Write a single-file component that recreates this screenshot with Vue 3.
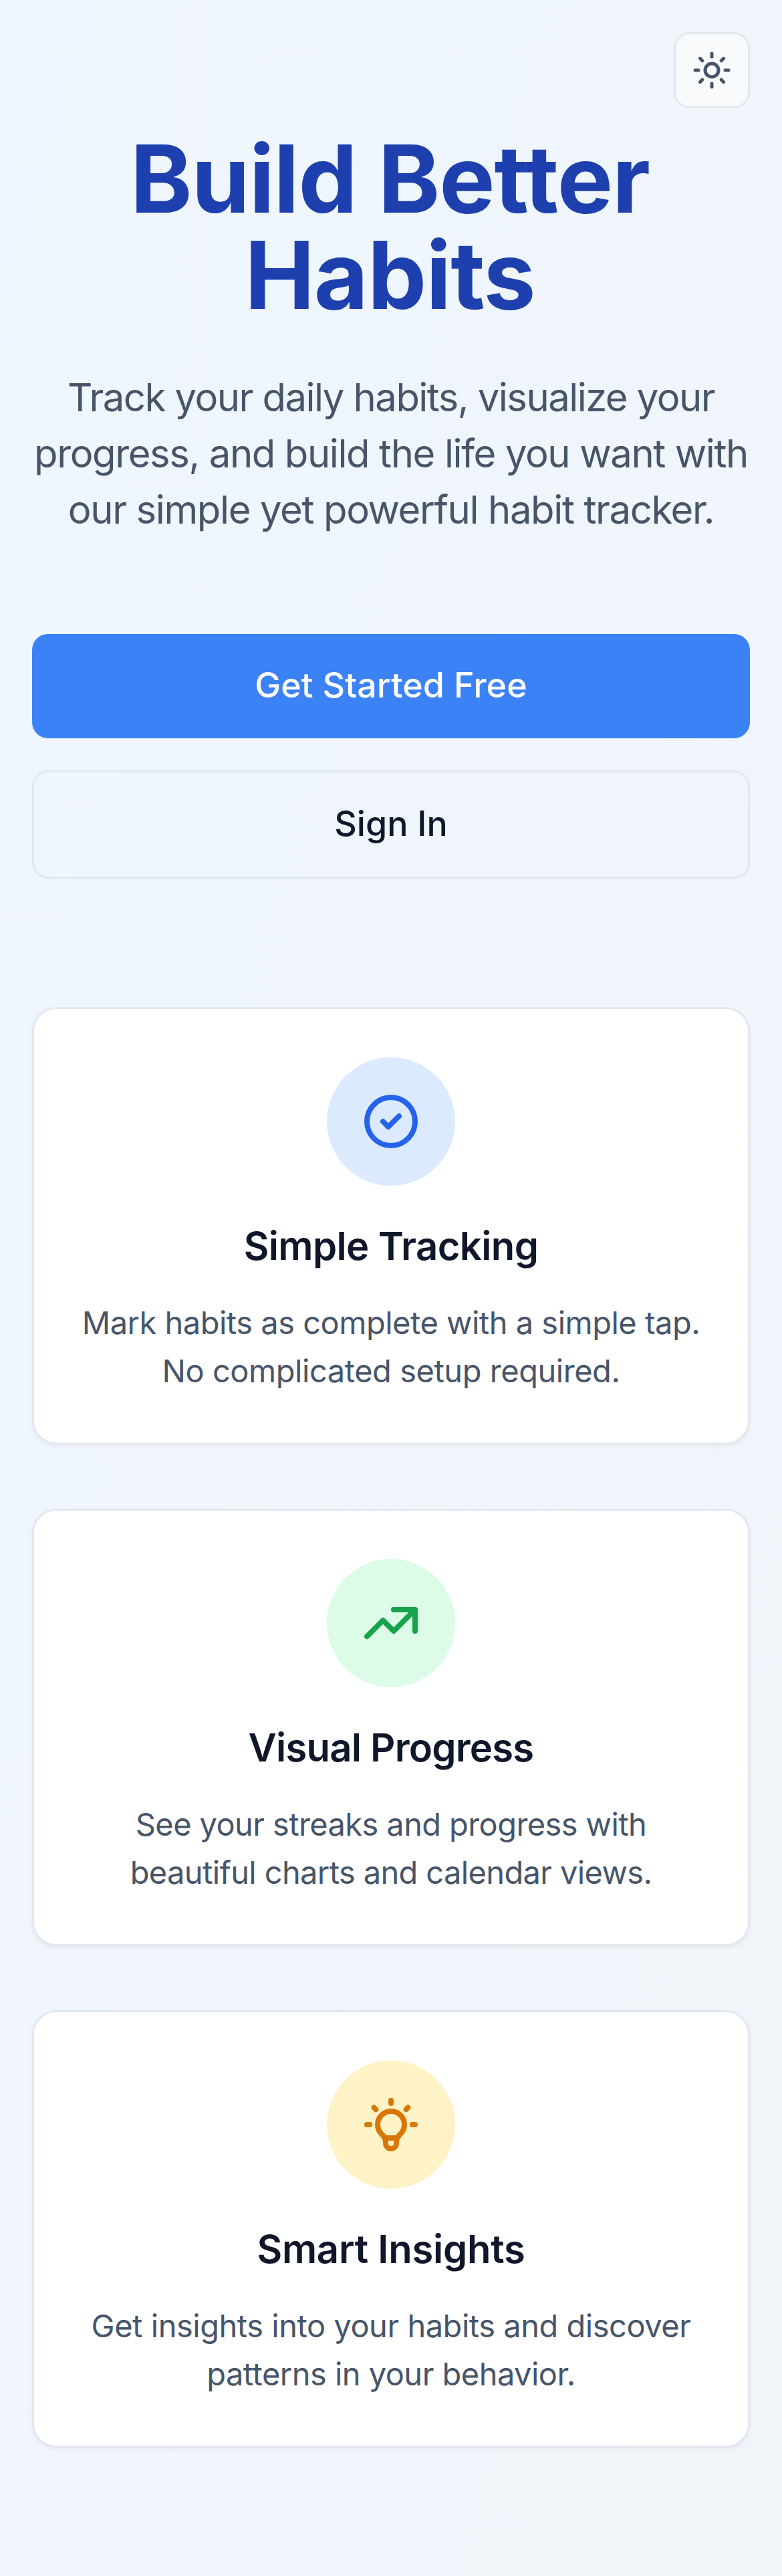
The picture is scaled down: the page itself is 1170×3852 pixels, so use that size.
<script setup>
const headline = [
  { text: 'Build Better', track: -1.06 },
  { text: 'Habits', track: -1.06 },
]

const intro = [
  { text: 'Track your daily habits, visualize your', track: -1.54 },
  { text: 'progress, and build the life you want with', track: -1.4 },
  { text: 'our simple yet powerful habit tracker.', track: -1.38 },
]

const features = [
  {
    tone: 'blue',
    title: { text: 'Simple Tracking', track: -0.62 },
    icon: 'M9 12l2 2 4-4m6 2a9 9 0 11-18 0 9 9 0 0118 0z',
    lines: [
      { text: 'Mark habits as complete with a simple tap.', track: -0.5 },
      { text: 'No complicated setup required.', track: -0.46 },
    ],
  },
  {
    tone: 'green',
    title: { text: 'Visual Progress', track: -0.77 },
    icon: 'M13 7h8m0 0v8m0-8l-8 8-4-4-6 6',
    lines: [
      { text: 'See your streaks and progress with', track: -0.6 },
      { text: 'beautiful charts and calendar views.', track: -0.63 },
    ],
  },
  {
    tone: 'amber',
    title: { text: 'Smart Insights', track: -0.25 },
    icon: 'M9.663 17h4.673M12 3v1m6.364 1.636l-.707.707M21 12h-1M4 12H3m3.343-5.657l-.707-.707m2.828 9.9a5 5 0 117.072 0l-.548.547A3.374 3.374 0 0014 18.469V19a2 2 0 11-4 0v-.531c0-.895-.356-1.754-.988-2.386l-.548-.547z',
    lines: [
      { text: 'Get insights into your habits and discover', track: -0.48 },
      { text: 'patterns in your behavior.', track: -0.52 },
    ],
  },
]

const tracking = (line) => ({ letterSpacing: `${line.track}px` })
</script>

<template>
  <div class="page">
    <header class="topbar">
      <button class="theme-toggle" type="button" aria-label="Toggle theme">
        <svg viewBox="0 0 24 24" aria-hidden="true">
          <circle cx="12" cy="12" r="4" />
          <path d="M12 2v2M12 20v2M4.93 4.93l1.41 1.41M17.66 17.66l1.41 1.41M2 12h2M20 12h2M6.34 17.66l-1.41 1.41M19.07 4.93l-1.41 1.41" />
        </svg>
      </button>
    </header>

    <main>
      <h1 class="headline">
        <span v-for="line in headline" :key="line.text" class="line" :style="tracking(line)">{{ line.text }}</span>
      </h1>
      <p class="intro">
        <span v-for="line in intro" :key="line.text" class="line" :style="tracking(line)">{{ line.text }}</span>
      </p>

      <div class="actions">
        <a class="btn primary">Get Started Free</a>
        <a class="btn outline">Sign In</a>
      </div>

      <section class="features">
        <article v-for="f in features" :key="f.tone" class="card">
          <div class="badge" :class="f.tone">
            <svg viewBox="0 0 24 24" aria-hidden="true"><path :d="f.icon" /></svg>
          </div>
          <h3 class="title" :style="tracking(f.title)">{{ f.title.text }}</h3>
          <p class="desc">
            <span v-for="line in f.lines" :key="line.text" class="line" :style="tracking(line)">{{ line.text }}</span>
          </p>
        </article>
      </section>
    </main>
  </div>
</template>

<style>
body {
  margin: 0;
}
</style>

<style scoped>
.page {
  box-sizing: border-box;
  min-height: 3852px;
  padding: 48px 48px 192px;
  background: linear-gradient(to bottom right, #eff6ff, #f1f5f9);
  color: #0f172a;
  font-family: Inter, "Liberation Sans", sans-serif;
  text-align: center;
}

svg {
  display: block;
  fill: none;
  stroke: currentColor;
  stroke-width: 2;
  stroke-linecap: round;
  stroke-linejoin: round;
}

.topbar {
  display: flex;
  justify-content: flex-end;
}

.theme-toggle {
  box-sizing: border-box;
  display: flex;
  align-items: center;
  justify-content: center;
  width: 114px;
  height: 114px;
  padding: 0;
  border: 3px solid #e2e8f0;
  border-radius: 24px;
  background: #f8fafc;
  color: #475569;
}

.theme-toggle svg {
  width: 60px;
  height: 60px;
}

.line {
  display: block;
  white-space: nowrap;
}

.headline {
  margin: 33px 0 69px;
  padding-right: 3px;
  color: #1e40af;
  font-size: 140px;
  font-weight: 700;
  line-height: 144px;
}

.intro {
  margin: 0;
  color: #475569;
  font-size: 58px;
  line-height: 84px;
}

.actions {
  display: flex;
  flex-direction: column;
  gap: 48px;
  margin-top: 144px;
}

.btn {
  box-sizing: border-box;
  display: flex;
  align-items: center;
  justify-content: center;
  padding-bottom: 3px;
  border-radius: 24px;
  font-size: 52px;
  font-weight: 500;
}

.primary {
  height: 156px;
  background: #3b82f6;
  color: #fff;
  letter-spacing: 0.08px;
}

.outline {
  height: 162px;
  border: 3px solid #e2e8f0;
}

.features {
  display: flex;
  flex-direction: column;
  gap: 96px;
  margin-top: 192px;
}

.card {
  display: flex;
  flex-direction: column;
  align-items: center;
  padding: 72px 72px 71px;
  border: 3px solid #e2e8f0;
  border-radius: 36px;
  background: #fff;
  box-shadow: 0 3px 6px rgba(0, 0, 0, 0.05);
}

.badge {
  display: flex;
  align-items: center;
  justify-content: center;
  width: 192px;
  height: 192px;
  border-radius: 50%;
}

.badge svg {
  width: 96px;
  height: 96px;
}

.blue {
  background: #dbeafe;
  color: #2563eb;
}

.green {
  background: #dcfce7;
  color: #16a34a;
}

.amber {
  background: #fef3c7;
  color: #d97706;
}

.title {
  margin: 48px 0 37px;
  font-size: 58px;
  font-weight: 600;
  line-height: 84px;
}

.desc {
  margin: 0;
  color: #475569;
  font-size: 47px;
  line-height: 72px;
}
</style>
